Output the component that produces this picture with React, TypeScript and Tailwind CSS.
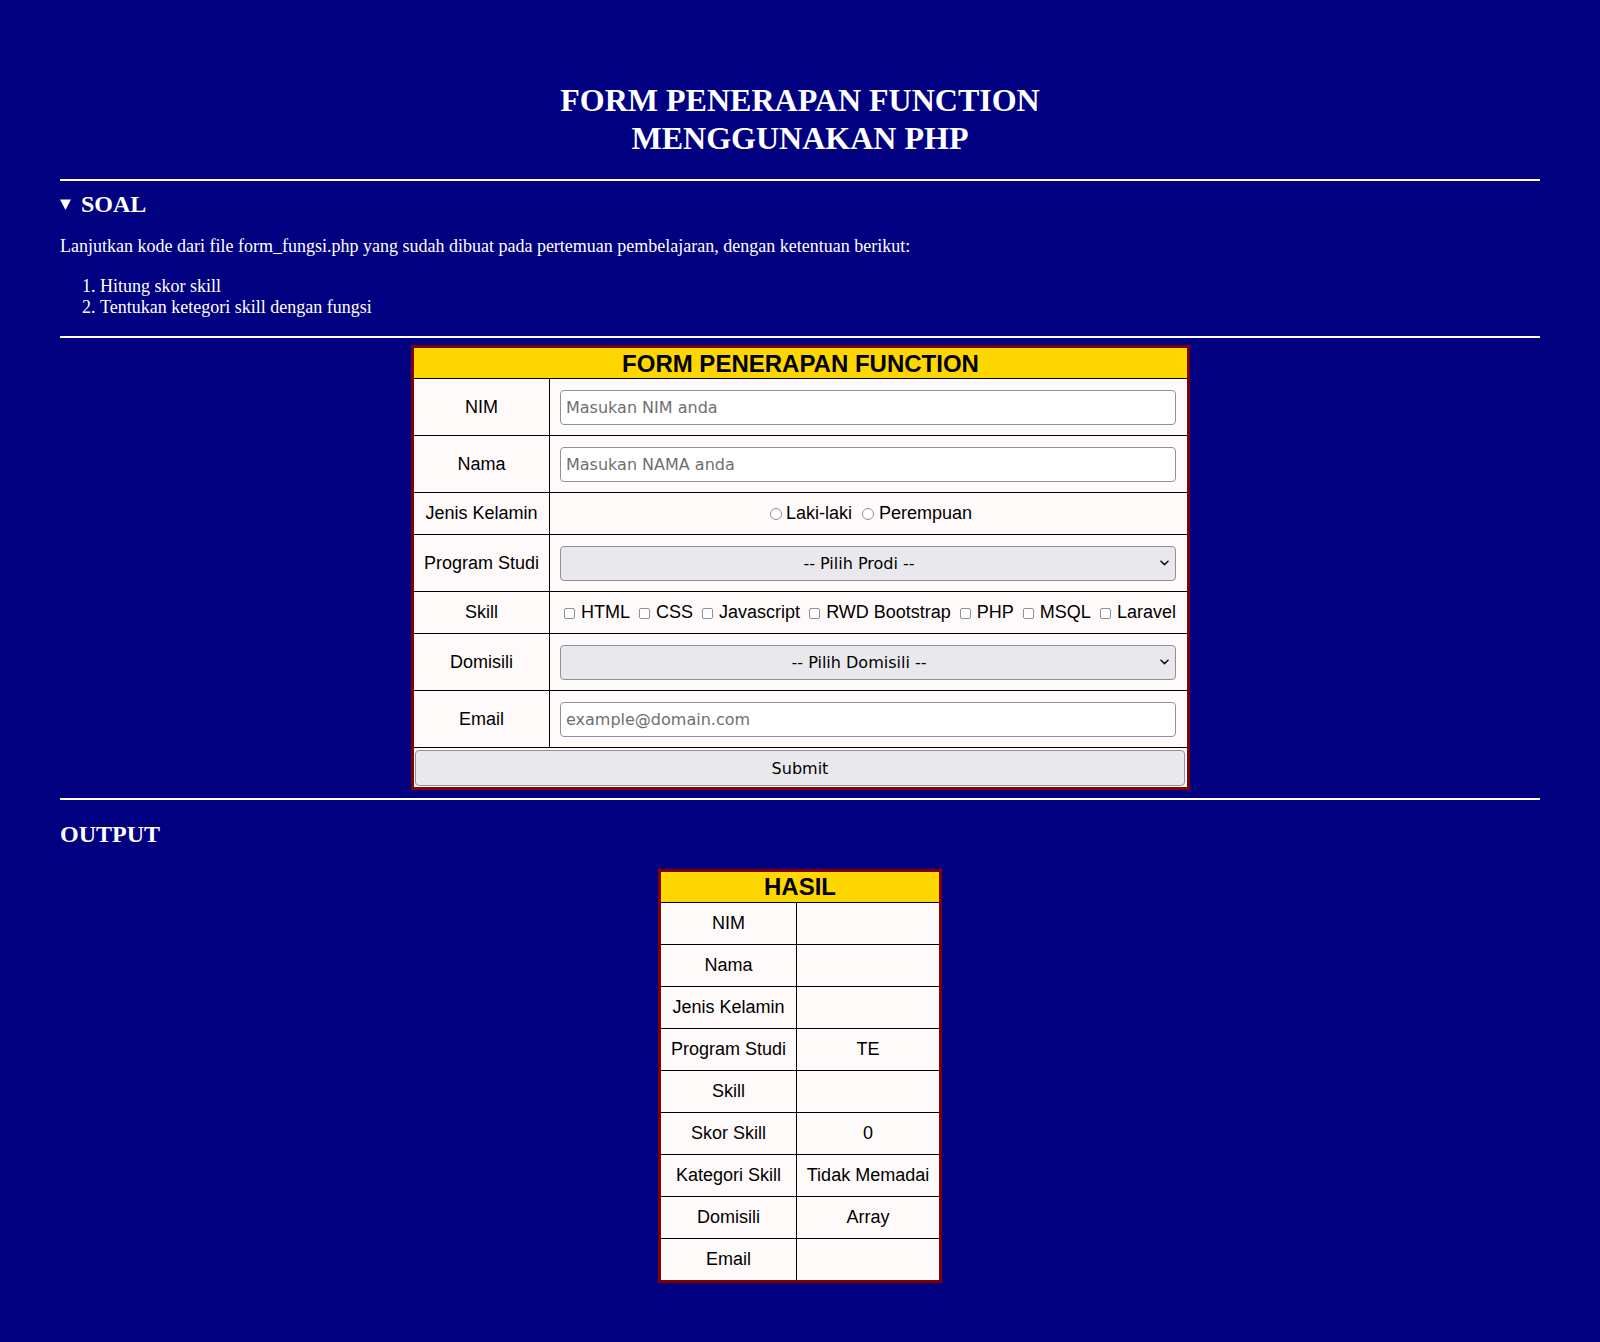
import React from 'react';

const skills = ['HTML', 'CSS', 'Javascript', 'RWD Bootstrap', 'PHP', 'MSQL', 'Laravel'];

const hasil: [string, string][] = [
  ['NIM', ''],
  ['Nama', ''],
  ['Jenis Kelamin', ''],
  ['Program Studi', 'TE'],
  ['Skill', ''],
  ['Skor Skill', '0'],
  ['Kategori Skill', 'Tidak Memadai'],
  ['Domisili', 'Array'],
  ['Email', ''],
];

const Chevron = () => (
  <svg
    className="pointer-events-none absolute right-[7px] top-1/2 -translate-y-1/2"
    width="9"
    height="6"
    viewBox="0 0 9 6"
    fill="none"
  >
    <path d="M1 1.2L4.5 4.6L8 1.2" stroke="#1b1b1b" strokeWidth="1.6" strokeLinecap="round" strokeLinejoin="round" />
  </svg>
);

const TextInput = ({ placeholder, type = 'text' }: { placeholder: string; type?: string }) => (
  <input
    type={type}
    placeholder={placeholder}
    className="h-[35px] w-full rounded-[4px] border border-[#8f8f9d] bg-white px-[5px] font-['DejaVu_Sans',sans-serif] text-[16px] text-black placeholder:text-[#6f6f6f]"
  />
);

const Select = ({ placeholder }: { placeholder: string }) => (
  <div className="relative w-full">
    <select
      defaultValue=""
      className="h-[35px] w-full appearance-none rounded-[4px] border border-[#8f8f9d] bg-[#e9e9ed] pl-[4px] pr-[22px] text-center [text-align-last:center] font-['DejaVu_Sans',sans-serif] text-[16px] text-black"
    >
      <option value="">{placeholder}</option>
    </select>
    <Chevron />
  </div>
);

const FormRow = ({ label, tall, children }: { label: string; tall?: boolean; children: React.ReactNode }) => (
  <div className="grid grid-cols-[136px_637px] border-b border-black">
    <div className={`flex items-center justify-center border-r border-black ${tall ? 'h-[56px]' : 'h-[41px]'}`}>
      {label}
    </div>
    <div className="flex items-center justify-center pl-[10px] pr-[11px]">{children}</div>
  </div>
);

const App = () => {
  return (
    <div className="min-h-screen bg-[#000080] px-[60px] pt-[81px] pb-[60px] font-['Liberation_Serif','Times_New_Roman',serif] text-white">
      <h1 className="text-center text-[32px] font-bold leading-[38px]">
        FORM PENERAPAN FUNCTION
        <br />
        MENGGUNAKAN PHP
      </h1>

      <hr className="mt-[22px] h-[2px] border-0 bg-white" />

      <details open className="mt-[9px]">
        <summary className="flex cursor-pointer list-none items-center text-[24px] font-bold leading-[28px] [&::-webkit-details-marker]:hidden">
          <svg width="11" height="11" viewBox="0 0 11 11" className="mr-[10px] shrink-0">
            <path d="M0 0.5H11L5.5 11Z" fill="white" />
          </svg>
          SOAL
        </summary>
        <p className="mt-[18px] text-[18px] leading-[21px]">
          Lanjutkan kode dari file form_fungsi.php yang sudah dibuat pada pertemuan pembelajaran, dengan ketentuan
          berikut:
        </p>
        <ol className="mt-[19px] list-decimal pl-[40px] text-[18px] leading-[20.5px]">
          <li>Hitung skor skill</li>
          <li>Tentukan ketegori skill dengan fungsi</li>
        </ol>
      </details>

      <hr className="mt-[19px] h-[2px] border-0 bg-white" />

      {/* form */}
      <form
        onSubmit={(e) => e.preventDefault()}
        className="ml-[351px] mt-[7px] w-[779px] border-[3px] border-[#800000] bg-[#fffafa] font-['Liberation_Sans',Arial,sans-serif] text-[18px] leading-[normal] text-black"
      >
        <div className="flex h-[31px] items-center justify-center border-b border-black bg-[#ffd700] pt-[2px] text-[24px] font-bold">
          FORM PENERAPAN FUNCTION
        </div>

        <FormRow label="NIM" tall>
          <TextInput placeholder="Masukan NIM anda" />
        </FormRow>
        <FormRow label="Nama" tall>
          <TextInput placeholder="Masukan NAMA anda" />
        </FormRow>
        <FormRow label="Jenis Kelamin">
          <div className="ml-[6px] flex items-center">
            <label className="flex items-center gap-[4px]">
              <input
                type="radio"
                name="jk"
                className="h-[12px] w-[12px] appearance-none rounded-full border border-[#8f8f9d] bg-white"
              />
              Laki-laki
            </label>
            <label className="ml-[10px] flex items-center gap-[5px]">
              <input
                type="radio"
                name="jk"
                className="h-[12px] w-[12px] appearance-none rounded-full border border-[#8f8f9d] bg-white"
              />
              Perempuan
            </label>
          </div>
        </FormRow>
        <FormRow label="Program Studi" tall>
          <Select placeholder="-- Pilih Prodi --" />
        </FormRow>
        <FormRow label="Skill">
          <div className="ml-[4px] flex items-center gap-[9px]">
            {skills.map((skill) => (
              <label key={skill} className="flex items-center gap-[6px]">
                <input
                  type="checkbox"
                  className="mt-[2px] h-[11px] w-[11px] appearance-none rounded-[2px] border border-[#8f8f9d] bg-white"
                />
                {skill}
              </label>
            ))}
          </div>
        </FormRow>
        <FormRow label="Domisili" tall>
          <Select placeholder="-- Pilih Domisili --" />
        </FormRow>
        <FormRow label="Email" tall>
          <TextInput type="email" placeholder="example@domain.com" />
        </FormRow>

        <div className="pb-[1px] pl-[1px] pr-[2px] pt-[2px]">
          <button
            type="submit"
            className="h-[36px] w-full rounded-[4px] border border-[#8f8f9d] bg-[#e9e9ed] font-['DejaVu_Sans',sans-serif] text-[16px] text-black"
          >
            Submit
          </button>
        </div>
      </form>

      <hr className="mt-[8px] h-[2px] border-0 bg-white" />

      <h2 className="mt-[20px] text-[24px] font-bold leading-[28px]">OUTPUT</h2>

      {/* hasil */}
      <div className="mx-auto mt-[21px] w-[284px] border-[3px] border-[#800000] bg-[#fffafa] font-['Liberation_Sans',Arial,sans-serif] text-[18px] leading-[normal] text-black">
        <div className="flex h-[31px] items-center justify-center border-b border-black bg-[#ffd700] text-[24px] font-bold">
          HASIL
        </div>
        {hasil.map(([label, value]) => (
          <div key={label} className="grid grid-cols-[136px_142px] border-b border-black last:border-b-0">
            <div className="flex h-[41px] items-center justify-center border-r border-black">{label}</div>
            <div className="flex items-center justify-center">{value}</div>
          </div>
        ))}
      </div>
    </div>
  );
};

export default App;
